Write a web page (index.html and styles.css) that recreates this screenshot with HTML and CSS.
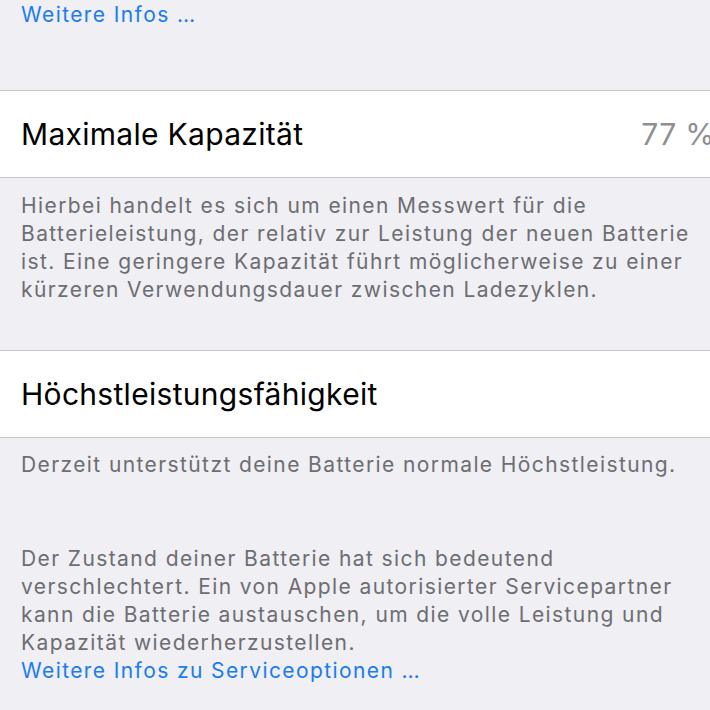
FILE: index.html
```html
<!DOCTYPE html>
<html lang="de">
<head>
<meta charset="utf-8">
<link rel="stylesheet" href="styles.css">
</head>
<body>
<div class="page">
  <div class="footer footer-top">
    <a class="link">Weitere Infos …</a>
  </div>
  <div class="cell">
    <span class="label">Maximale Kapazität</span>
    <span class="value">77 %</span>
  </div>
  <div class="footer footer-cap">
    <p>Hierbei handelt es sich um einen Messwert für die Batterieleistung, der relativ zur Leistung der neuen Batterie ist. Eine geringere Kapazität führt möglicherweise zu einer kürzeren Verwendungsdauer zwischen Ladezyklen.</p>
  </div>
  <div class="cell">
    <span class="label">Höchstleistungsfähigkeit</span>
  </div>
  <div class="footer footer-perf">
    <p class="first">Derzeit unterstützt deine Batterie normale Höchstleistung.</p>
    <p class="second">Der Zustand deiner Batterie hat sich bedeutend verschlechtert. Ein von Apple autorisierter Servicepartner kann die Batterie austauschen, um die volle Leistung und Kapazität wiederherzustellen.<br><a class="link">Weitere Infos zu Serviceoptionen …</a></p>
  </div>
</div>
</body>
</html>
```

FILE: styles.css
```css
html, body {
  margin: 0;
  padding: 0;
  background: #efeff4;
}
body {
  font-family: Inter, "Liberation Sans", sans-serif;
  width: 710px;
  height: 710px;
  overflow: hidden;
}
.page {
  display: flex;
  flex-direction: column;
}
.footer {
  box-sizing: border-box;
  padding: 0 10px 0 21px;
  color: #6d6d72;
  font-size: 21px;
  line-height: 28px;
  letter-spacing: 1.4px;
}
.footer p {
  margin: 0;
}
.link {
  color: #1a7cf0;
  text-decoration: none;
}
.footer-top {
  padding-top: 1px;
  height: 90px;
}
.cell {
  background: #ffffff;
  border-top: 1px solid #c8c7cc;
  border-bottom: 1px solid #c8c7cc;
  height: 86px;
  display: flex;
  align-items: center;
  justify-content: space-between;
  padding-left: 21px;
  font-size: 30px;
  letter-spacing: 0.3px;
  color: #000000;
  overflow: hidden;
  white-space: nowrap;
}
.value {
  color: #8e8e93;
  margin-right: -5px;
}
.footer-cap {
  padding-top: 14px;
  padding-bottom: 46px;
}
.footer-perf {
  padding-top: 13px;
}
.footer-perf .second {
  margin-top: 66px;
}
```
